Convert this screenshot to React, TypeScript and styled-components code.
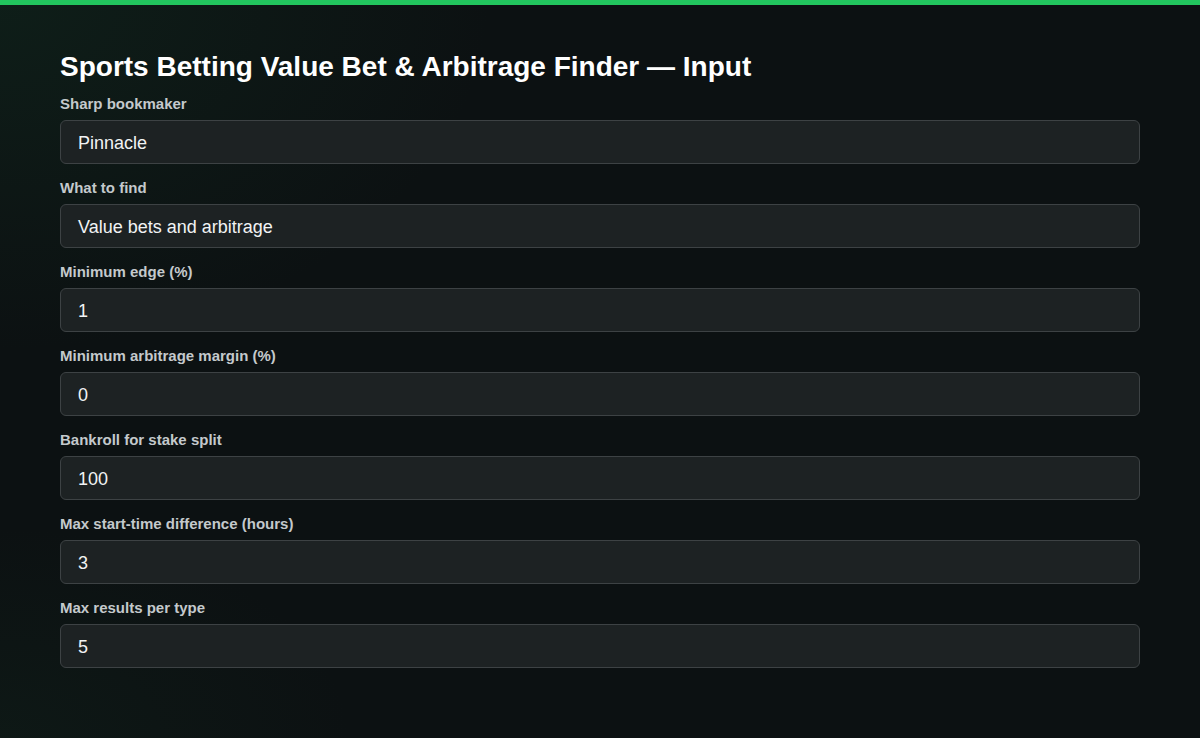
import React from 'react';
import styled, { createGlobalStyle } from 'styled-components';

const fields = [
  { label: 'Sharp bookmaker', value: 'Pinnacle' },
  { label: 'What to find', value: 'Value bets and arbitrage' },
  { label: 'Minimum edge (%)', value: '1' },
  { label: 'Minimum arbitrage margin (%)', value: '0' },
  { label: 'Bankroll for stake split', value: '100' },
  { label: 'Max start-time difference (hours)', value: '3' },
  { label: 'Max results per type', value: '5' },
];

export default function App(): JSX.Element {
  return (
    <>
      <Global />
      <Page>
        <TopBar />
        <Main>
          <Title>Sports Betting Value Bet &amp; Arbitrage Finder — Input</Title>
          <Form>
            {fields.map((f) => (
              <Field key={f.label}>
                <Label>{f.label}</Label>
                <Input>{f.value}</Input>
              </Field>
            ))}
          </Form>
        </Main>
      </Page>
    </>
  );
}

const Global = createGlobalStyle`
  html, body {
    margin: 0;
    padding: 0;
    background: #0c1112;
  }
  * {
    box-sizing: border-box;
  }
`;

const Page = styled.div`
  min-height: 738px;
  font-family: 'Liberation Sans', Arial, sans-serif;
  background:
    radial-gradient(ellipse 700px 500px at 0% 0%, rgba(20, 60, 40, 0.3), transparent 70%),
    radial-gradient(ellipse 500px 300px at 0% 100%, rgba(20, 50, 35, 0.22), transparent 70%),
    #0c1112;
`;

const TopBar = styled.div`
  height: 5px;
  background: #22c55e;
`;

const Main = styled.main`
  padding: 46px 60px 0;
`;

const Title = styled.h1`
  margin: 0 0 12px;
  font-size: 28px;
  line-height: 32px;
  font-weight: 700;
  color: #ffffff;
`;

const Form = styled.div`
  display: flex;
  flex-direction: column;
  gap: 15px;
`;

const Field = styled.div`
  display: flex;
  flex-direction: column;
  gap: 7px;
`;

const Label = styled.div`
  font-size: 15px;
  line-height: 18px;
  font-weight: 700;
  color: #c4c9cc;
`;

const Input = styled.div`
  height: 44px;
  display: flex;
  align-items: center;
  padding: 2px 17px 0;
  border: 1px solid #3d4244;
  border-radius: 6px;
  background: #1d2223;
  color: #f1f3f4;
  font-size: 18px;
`;
